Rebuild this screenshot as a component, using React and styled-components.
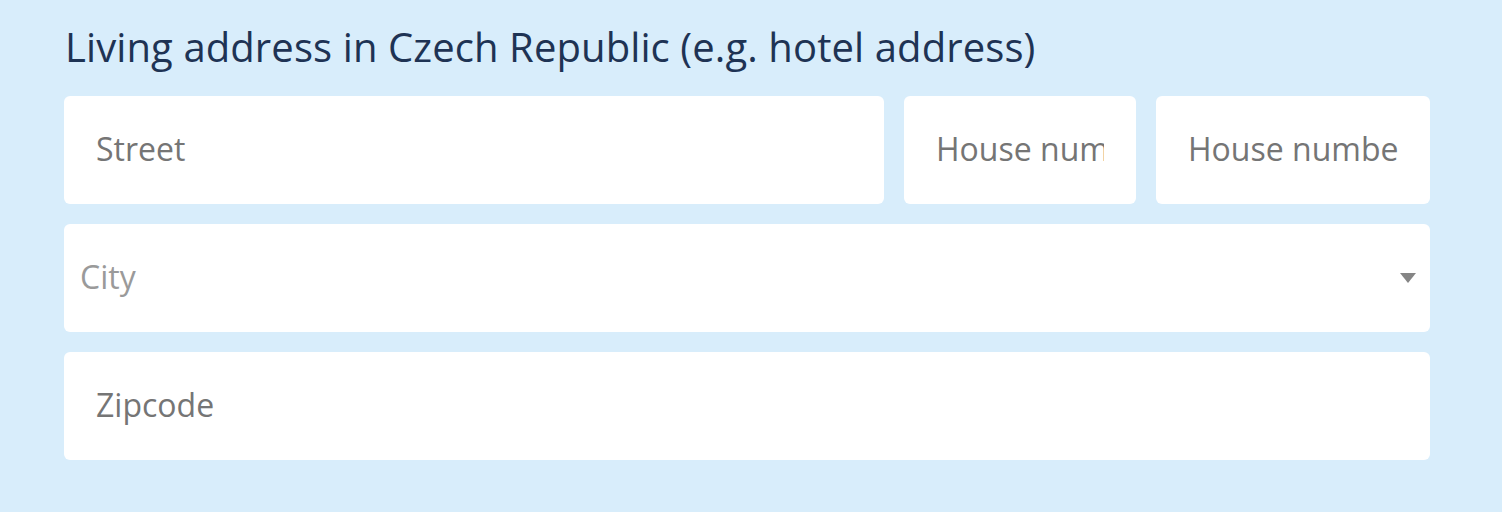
import React from "react";
import styled, { createGlobalStyle } from "styled-components";

const Global = createGlobalStyle`
  html, body { margin: 0; padding: 0; background: #d8edfb; }
  body { font-family: "Open Sans", "Liberation Sans", sans-serif; }
  * { box-sizing: border-box; }
`;

const Section = styled.section`
  width: 1502px;
  height: 512px;
  padding: 20px 72px 0 64px;
  background: #d8edfb;
`;

const Title = styled.h2`
  margin: 0 0 22px 1px;
  font-family: "Open Sans", "Liberation Sans", sans-serif;
  font-weight: 400;
  font-size: 40px;
  letter-spacing: 0.1px;
  line-height: 54px;
  color: #1e3354;
  white-space: nowrap;
`;

const Rows = styled.div`
  display: flex;
  flex-direction: column;
  gap: 20px;
`;

const Row = styled.div`
  display: grid;
  grid-template-columns: ${(p) => p.$cols || "1fr"};
  gap: 20px;
`;

const Input = styled.input`
  display: block;
  width: 100%;
  height: 108px;
  border: none;
  outline: none;
  border-radius: 6px;
  background: #ffffff;
  padding: 0 32px 4px;
  font-family: "Open Sans", "Liberation Sans", sans-serif;
  font-size: 32px;
  color: #333;
  &::placeholder { color: #757575; opacity: 1; }
`;

const SelectWrap = styled.div`
  position: relative;
`;

const Select = styled.select`
  display: block;
  width: 100%;
  height: 108px;
  border: none;
  outline: none;
  border-radius: 6px;
  background: #ffffff;
  padding: 0 48px 4px 16px;
  appearance: none;
  -webkit-appearance: none;
  font-family: "Open Sans", "Liberation Sans", sans-serif;
  font-size: 32px;
  color: #9a9a9a;
`;

const Arrow = styled.svg`
  position: absolute;
  right: 14px;
  top: 50%;
  transform: translateY(-50%);
  width: 16px;
  height: 10px;
  pointer-events: none;
`;

export default function App() {
  return (
    <>
      <Global />
      <Section>
        <Title>Living address in Czech Republic (e.g. hotel address)</Title>
        <Rows>
          <Row $cols="820px 232px 274px">
            <Input placeholder="Street" />
            <Input placeholder="House number" />
            <Input placeholder="House number (orientation)" />
          </Row>
          <Row>
            <SelectWrap>
              <Select defaultValue="">
                <option value="" disabled>City</option>
                <option value="praha">Praha</option>
                <option value="brno">Brno</option>
              </Select>
              <Arrow viewBox="0 0 16 10">
                <path d="M0 0 L16 0 L8 10 Z" fill="#858585" />
              </Arrow>
            </SelectWrap>
          </Row>
          <Row>
            <Input placeholder="Zipcode" />
          </Row>
        </Rows>
      </Section>
    </>
  );
}
